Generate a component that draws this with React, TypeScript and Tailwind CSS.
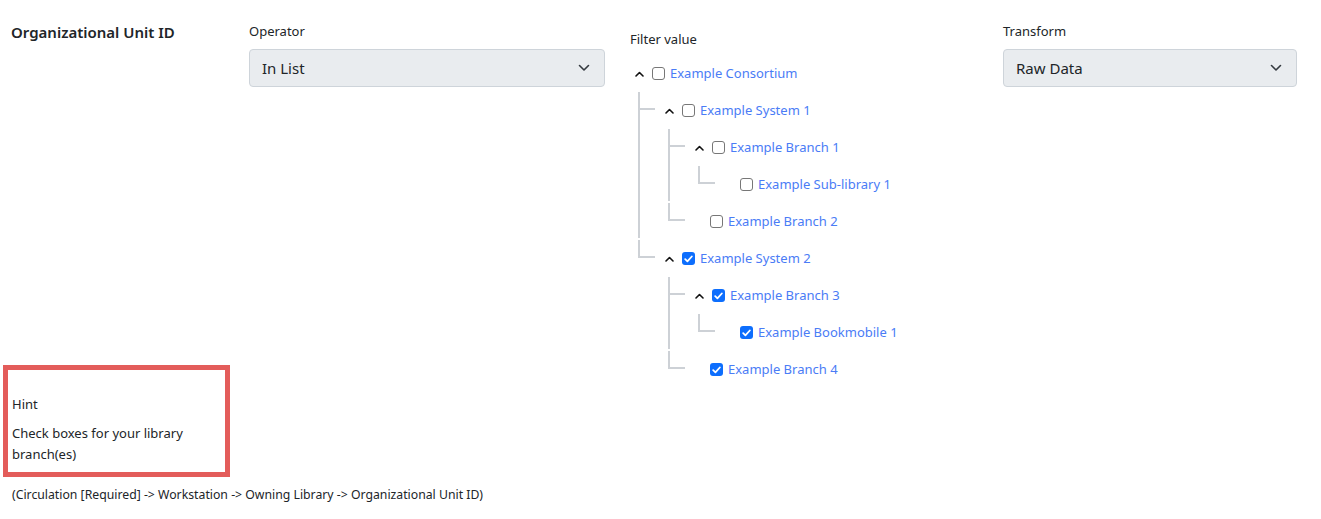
import React from "react";

type TreeNode = { label: string; checked: boolean; children?: TreeNode[] };

const tree: TreeNode = {
  label: "Example Consortium",
  checked: false,
  children: [
    {
      label: "Example System 1",
      checked: false,
      children: [
        { label: "Example Branch 1", checked: false, children: [{ label: "Example Sub-library 1", checked: false }] },
        { label: "Example Branch 2", checked: false },
      ],
    },
    {
      label: "Example System 2",
      checked: true,
      children: [
        { label: "Example Branch 3", checked: true, children: [{ label: "Example Bookmobile 1", checked: true }] },
        { label: "Example Branch 4", checked: true },
      ],
    },
  ],
};

function Chevron() {
  return (
    <svg width="12" height="8" viewBox="0 0 12 8" fill="none" className="text-[#343a40]">
      <path d="M1.5 1.5 6 6l4.5-4.5" stroke="currentColor" strokeWidth="1.6" strokeLinecap="round" strokeLinejoin="round" />
    </svg>
  );
}

function Caret() {
  return (
    <svg width="9" height="6" viewBox="0 0 9 6" fill="none">
      <path d="M1 5 4.5 1.5 8 5" stroke="#111" strokeWidth="1.6" strokeLinecap="round" strokeLinejoin="round" />
    </svg>
  );
}

function Checkbox({ checked }: { checked: boolean }) {
  if (checked) {
    return (
      <span className="ml-[5px] flex h-[13px] w-[13px] items-center justify-center rounded-[3px] bg-[#0d6efd]">
        <svg width="9" height="8" viewBox="0 0 9 8" fill="none">
          <path d="M1.2 4.2 3.4 6.3 7.8 1.5" stroke="white" strokeWidth="1.8" strokeLinecap="round" strokeLinejoin="round" />
        </svg>
      </span>
    );
  }
  return <span className="ml-[5px] h-[13px] w-[13px] rounded-[3px] border border-[#777] bg-white" />;
}

function Branch({ node }: { node: TreeNode }) {
  const hasKids = !!node.children?.length;
  return (
    <div>
      <div className="flex h-[37px] items-center">
        {hasKids ? (
          <span className="flex w-4 justify-center">
            <Caret />
          </span>
        ) : (
          <span className="w-[14px]" />
        )}
        <Checkbox checked={node.checked} />
        <span className="ml-[5px] text-[13px] text-[#4a7cf6]">{node.label}</span>
      </div>
      {hasKids && (
        <div className="ml-[7px]">
          {node.children!.map((child, i) => {
            const last = i === node.children!.length - 1;
            return (
              <div key={child.label} className="relative pl-[23px]">
                {!last && <span className="absolute bottom-[2px] left-0 top-0 border-l-2 border-[#cdd1d6]" />}
                <span className="absolute left-0 top-0 h-[18px] w-[17px] border-b-2 border-l-2 border-[#cdd1d6]" />
                <Branch node={child} />
              </div>
            );
          })}
        </div>
      )}
    </div>
  );
}

function Select({ value }: { value: string }) {
  return (
    <div className="flex h-[38px] items-center justify-between rounded-[4px] border border-[#ced4da] bg-[#e9ecef] pl-[12px] pr-[14px]">
      <span className="text-[15px] text-[#212529]">{value}</span>
      <Chevron />
    </div>
  );
}

export default function App() {
  return (
    <div className="bg-white pt-[21px] text-[#212529] [font-family:'Noto_Sans',sans-serif]">
      <div className="flex">
        <div className="flex w-[249px] flex-col pl-[3px]">
          <h3 className="pl-[8px] text-[15px] font-semibold leading-[22px]">Organizational Unit ID</h3>
          <div className="mt-[322px] w-[227px] border-[5px] border-[#e35c5a] pb-[7px] pl-[4px] pt-[24px] text-[13px] leading-[21px]">
            <p className="leading-[20px]">Hint</p>
            <p className="mt-[9px]">Check boxes for your library branch(es)</p>
          </div>
        </div>
        <div className="w-[356px]">
          <label className="block text-[13px] leading-[20px]">Operator</label>
          <div className="mt-[8px]">
            <Select value="In List" />
          </div>
        </div>
        <div className="w-[398px] pl-[25px] pt-[8px]">
          <label className="block text-[13px] leading-[20px]">Filter value</label>
          <div className="mt-[6px] pl-[1px]">
            <Branch node={tree} />
          </div>
        </div>
        <div className="w-[294px]">
          <label className="block text-[13px] leading-[20px]">Transform</label>
          <div className="mt-[8px]">
            <Select value="Raw Data" />
          </div>
        </div>
      </div>
      <p className="mt-[8px] pl-[12px] text-[12.25px] leading-[20px]">
        (Circulation [Required] -&gt; Workstation -&gt; Owning Library -&gt; Organizational Unit ID)
      </p>
    </div>
  );
}
